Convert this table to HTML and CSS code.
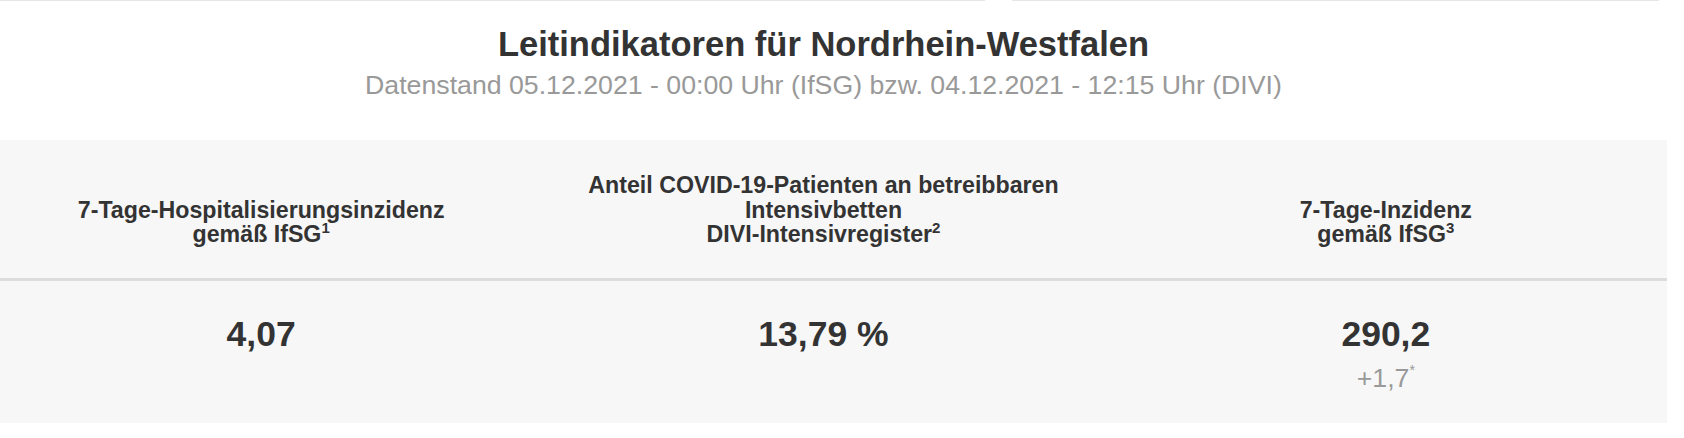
FILE: index.html
```html
<!DOCTYPE html>
<html lang="de">
<head>
<meta charset="utf-8">
<title>Leitindikatoren</title>
<link rel="stylesheet" href="styles.css">
</head>
<body>
<div class="topline">
  <div class="seg seg-a"></div>
  <div class="seg seg-b"></div>
</div>
<main class="page">
  <header class="heading">
    <h1 class="title">Leitindikatoren für Nordrhein-Westfalen</h1>
    <p class="subtitle">Datenstand 05.12.2021 - 00:00 Uhr (IfSG) bzw. 04.12.2021 - 12:15 Uhr (DIVI)</p>
  </header>
  <section class="table">
    <div class="row head">
      <div class="cell">7-Tage-Hospitalisierungsinzidenz<br>gemäß IfSG<sup>1</sup></div>
      <div class="cell">Anteil COVID-19-Patienten an betreibbaren<br>Intensivbetten<br>DIVI-Intensivregister<sup>2</sup></div>
      <div class="cell">7-Tage-Inzidenz<br>gemäß IfSG<sup>3</sup></div>
    </div>
    <div class="row vals">
      <div class="cell"><div class="value">4,07</div></div>
      <div class="cell"><div class="value">13,79 %</div></div>
      <div class="cell"><div class="value">290,2</div><div class="delta">+1,7<sup>*</sup></div></div>
    </div>
  </section>
</main>
</body>
</html>
```
FILE: styles.css
```css
html, body {
  margin: 0;
  padding: 0;
  background: #ffffff;
}
body {
  font-family: "Liberation Sans", Arial, Helvetica, sans-serif;
  color: #333333;
  overflow: hidden;
}
.topline {
  display: flex;
  gap: 27px;
  height: 1px;
}
.seg {
  height: 1px;
  background: #e6e6e6;
}
.seg-a { width: 985px; }
.seg-b { width: 647px; }

.page {
  margin-left: -20px;
  width: 1687px;
}

.heading {
  text-align: center;
  padding-top: 23px;
  height: 139px;
  box-sizing: border-box;
}
.title {
  margin: 0;
  font-size: 34.5px;
  line-height: 40px;
  font-weight: bold;
  color: #333333;
}
.subtitle {
  margin: 5px 0 0;
  font-size: 26.7px;
  line-height: 32px;
  color: #999999;
}

.table {
  height: 283px;
  background: #f7f7f7;
  font-weight: bold;
}
.row {
  display: grid;
  grid-template-columns: repeat(3, 1fr);
  text-align: center;
}
.head {
  align-items: end;
  padding: 33px 0 35px;
  border-bottom: 3px solid #dddddd;
  font-size: 23.2px;
  line-height: 24.7px;
  height: 141px;
  box-sizing: border-box;
}
.head sup {
  font-size: 15px;
  line-height: 0;
  vertical-align: 9px;
}
.vals {
  padding-top: 32px;
}
.value {
  font-size: 35.5px;
  line-height: 42px;
}
.delta {
  margin-top: 7px;
  font-size: 26.7px;
  line-height: 32px;
  font-weight: normal;
  color: #999999;
}
.delta sup {
  font-size: 14px;
  line-height: 0;
  vertical-align: 12px;
}
```
